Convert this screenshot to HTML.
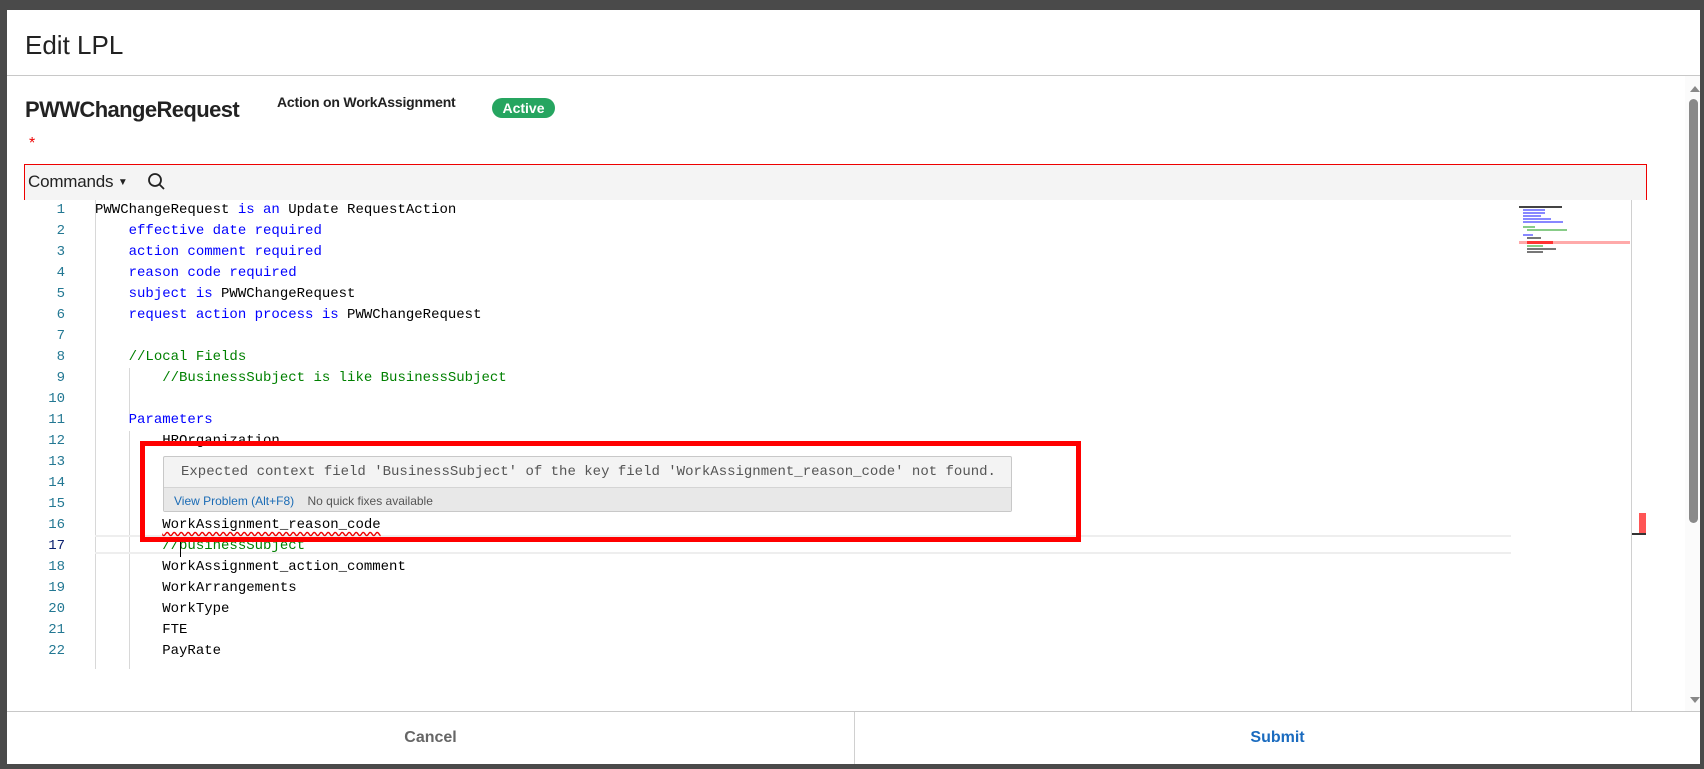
<!DOCTYPE html>
<html><head><meta charset="utf-8"><style>
*{margin:0;padding:0;box-sizing:border-box}
body{width:1704px;height:769px;background:#4a4a4a;position:relative;overflow:hidden;font-family:"Liberation Sans",sans-serif}
.modal{position:absolute;left:7px;top:10px;width:1693px;height:754px;background:#fff}
.a{position:absolute}
.code{font-family:"Liberation Mono",monospace;font-size:14px;line-height:21px;white-space:pre}
.ln{position:absolute;left:0;width:58px;text-align:right;color:#237893;font-family:"Liberation Mono",monospace;font-size:14px;line-height:21px}
.k{color:#0000ff}.c{color:#008000}
.mm div{position:absolute;height:2px}
</style></head><body>
<div class="modal">
 <div class="a" style="left:18px;top:20px;font-size:26px;color:#222">Edit LPL</div>
 <div class="a" style="left:0;top:65px;width:1693px;height:1px;background:#c8c8c8"></div>
 <div class="a" style="left:18px;top:87px;font-size:22px;font-weight:bold;color:#222;letter-spacing:-0.6px">PWWChangeRequest</div>
 <div class="a" style="left:270px;top:84px;font-size:14px;font-weight:bold;color:#222;letter-spacing:-0.2px">Action on WorkAssignment</div>
 <div class="a" style="left:485px;top:88px;width:63px;height:20px;border-radius:10px;background:#26a560;color:#fff;font-size:14px;font-weight:bold;text-align:center;line-height:20px">Active</div>
 <div class="a" style="left:22px;top:125px;color:#e00;font-size:16px">*</div>
 <div class="a" style="left:17px;top:154px;width:1623px;height:36px;background:#f4f4f4;border:1px solid #e00;border-bottom:none"></div>
 <div class="a" style="left:21px;top:162px;font-size:17px;color:#222;letter-spacing:-0.2px">Commands <span style="font-size:10px;vertical-align:2px">▼</span></div>
 <svg class="a" style="left:140px;top:162px" width="20" height="20" viewBox="0 0 20 20"><circle cx="8" cy="8" r="6" fill="none" stroke="#222" stroke-width="1.8"/><line x1="12.5" y1="12.5" x2="17" y2="17" stroke="#222" stroke-width="1.8"/></svg>
 <div class="a" style="left:0;top:190px;width:1624px;height:511px;background:#fff"></div>
 <div class="a" style="left:1624px;top:190px;width:1px;height:511px;background:#d0d0d0"></div>
 <div class="a" style="left:88px;top:190px;width:1px;height:469px;background:#d8d8d8"></div>
 <div class="a" style="left:122px;top:358px;width:1px;height:46px;background:#d8d8d8"></div>
 <div class="a" style="left:122px;top:421px;width:1px;height:238px;background:#d8d8d8"></div>
 <div class="a" style="left:88px;top:525px;width:1416px;height:19px;border-top:2px solid #eee;border-bottom:2px solid #eee"></div>
 <div class="a ln" style="top:190px">1<br>2<br>3<br>4<br>5<br>6<br>7<br>8<br>9<br>10<br>11<br>12<br>13<br>14<br>15<br>16<br><span style="color:#0b216f">17</span><br>18<br>19<br>20<br>21<br>22</div>
 <div class="a code" style="left:88px;top:190px;color:#000">PWWChangeRequest <span class="k">is an</span> Update RequestAction
    <span class="k">effective date required</span>
    <span class="k">action comment required</span>
    <span class="k">reason code required</span>
    <span class="k">subject is</span> PWWChangeRequest
    <span class="k">request action process is</span> PWWChangeRequest

    <span class="c">//Local Fields</span>
        <span class="c">//BusinessSubject is like BusinessSubject</span>

    <span class="k">Parameters</span>
        HROrganization



        <span style="text-decoration:underline wavy #e00;text-underline-offset:3px">WorkAssignment_reason_code</span>
        <span class="c">//businessSubject</span>
        WorkAssignment_action_comment
        WorkArrangements
        WorkType
        FTE
        PayRate</div>
 <div class="a" style="left:173px;top:528px;width:1px;height:19px;background:#000"></div>
 <div class="a" style="left:156px;top:446px;width:849px;height:56px;background:#f3f3f3;border:1px solid #c8c8c8;border-radius:2px">
  <div style="height:31px;border-bottom:1px solid #d4d4d4;font-family:'Liberation Mono',monospace;font-size:14px;color:#555;padding:7px 0 0 17px">Expected context field 'BusinessSubject' of the key field 'WorkAssignment_reason_code' not found.</div>
  <div style="font-size:12px;padding:6px 0 0 10px;color:#555;background:#e8e8e8;height:23px"><span style="color:#1a6bb5">View Problem (Alt+F8)</span>&nbsp;&nbsp;&nbsp;&nbsp;No quick fixes available</div>
 </div>
 <div class="a" style="left:133px;top:431px;width:941px;height:101px;border:5px solid #f00"></div>
 <div class="a mm" style="left:1512px;top:196px;width:112px;height:50px">
  <div style="left:0;top:0;width:43px;background:#444"></div>
  <div style="left:4px;top:3px;width:22px;background:#88f"></div>
  <div style="left:4px;top:6px;width:22px;background:#88f"></div>
  <div style="left:4px;top:9px;width:18px;background:#88f"></div>
  <div style="left:4px;top:12px;width:28px;background:#88f"></div>
  <div style="left:4px;top:15px;width:40px;background:#88f"></div>
  <div style="left:4px;top:20px;width:12px;background:#8c8"></div>
  <div style="left:8px;top:23px;width:40px;background:#8c8"></div>
  <div style="left:4px;top:28px;width:10px;background:#88f"></div>
  <div style="left:8px;top:31px;width:14px;background:#777"></div>
  <div style="left:0;top:35px;width:111px;height:3px;background:#faa"></div>
  <div style="left:8px;top:35px;width:26px;height:3px;background:#f33"></div>
  <div style="left:8px;top:39px;width:16px;background:#8c8"></div>
  <div style="left:8px;top:42px;width:29px;background:#777"></div>
  <div style="left:8px;top:45px;width:16px;background:#777"></div>
 </div>
 <div class="a" style="left:1632px;top:503px;width:7px;height:20px;background:#f55"></div>
 <div class="a" style="left:1625px;top:523px;width:14px;height:2px;background:#333"></div>
 <div class="a" style="left:1678px;top:66px;width:15px;height:635px;background:#fbfbfb"></div>
 <div class="a" style="left:1683px;top:76px;width:0;height:0;border-left:5px solid transparent;border-right:5px solid transparent;border-bottom:6px solid #888"></div>
 <div class="a" style="left:1682px;top:89px;width:9px;height:424px;border-radius:5px;background:#8a8a8a"></div>
 <div class="a" style="left:1683px;top:687px;width:0;height:0;border-left:5px solid transparent;border-right:5px solid transparent;border-top:6px solid #888"></div>
 <div class="a" style="left:0;top:701px;width:1693px;height:1px;background:#c8c8c8"></div>
 <div class="a" style="left:847px;top:702px;width:1px;height:52px;background:#d0d0d0"></div>
 <div class="a" style="left:0;top:719px;width:847px;text-align:center;font-size:16px;font-weight:bold;color:#666">Cancel</div>
 <div class="a" style="left:848px;top:719px;width:845px;text-align:center;font-size:16px;font-weight:bold;color:#1a6bbf">Submit</div>
</div>
</body></html>
